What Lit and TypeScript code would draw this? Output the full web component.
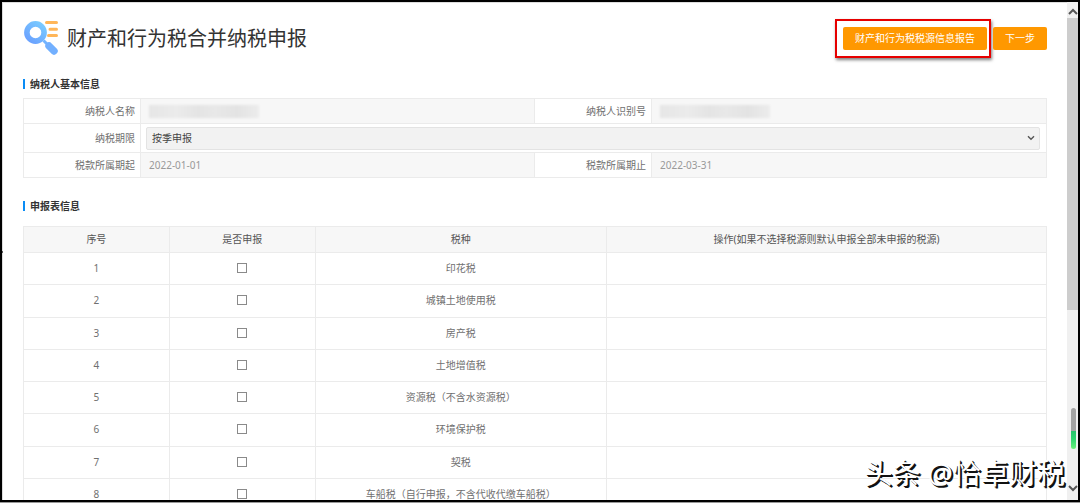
import { LitElement, html, css } from "lit";
import { customElement, property } from "lit/decorators.js";

const TAXES = [
  "印花税",
  "城镇土地使用税",
  "房产税",
  "土地增值税",
  "资源税（不含水资源税）",
  "环境保护税",
  "契税",
  "车船税（自行申报，不含代收代缴车船税）",
];

@customElement("section-title")
class SectionTitle extends LitElement {
  @property() text = "";

  static styles = css`
    :host {
      display: block;
    }
    .title {
      display: flex;
      align-items: center;
      gap: 5px;
      margin: 0;
      font-size: 10px;
      line-height: 16px;
      font-weight: 700;
      color: #333;
    }
    .bar {
      width: 2px;
      height: 10px;
      background: #0a8cf5;
    }
  `;

  render() {
    return html`<h2 class="title"><span class="bar"></span>${this.text}</h2>`;
  }
}

@customElement("app-root")
class AppRoot extends LitElement {
  static styles = css`
    :host {
      display: block;
      height: 100vh;
      background: #999;
      font-family: "Noto Sans", "Noto Sans CJK SC", sans-serif;
      font-size: 10px;
      line-height: 16px;
      color: #707070;
    }
    * {
      box-sizing: border-box;
    }
    .frame {
      position: relative;
      display: flex;
      height: calc(100vh - 1px);
      border: 2px solid #000;
      background: #fff;
      overflow: hidden;
    }
    .page {
      flex: 1;
      min-width: 0;
      overflow: hidden;
      padding: 16px 20px 0 20px;
      border-left: 1px solid #ddd;
      border-top: 1px solid #ddd;
    }
    .head {
      display: flex;
      align-items: center;
      height: 38px;
    }
    .logo {
      flex: none;
      width: 36px;
      height: 36px;
    }
    .name {
      flex: 1;
      margin: 0 0 0 8px;
      padding-top: 2px;
      font-size: 20px;
      line-height: 28px;
      font-weight: 400;
      color: #333;
    }
    .btn {
      height: 23px;
      padding: 0 12px;
      border: 0;
      border-radius: 2px;
      background: #ff9800;
      color: #fff;
      font: inherit;
    }
    .marked {
      display: flex;
      padding: 6px 2px 6px 6px;
      border: 2px solid #e60000;
      box-shadow: 1px 2px 3px rgba(0, 0, 0, 0.5);
      margin-right: 2px;
    }
    .basic {
      margin-top: 19px;
    }
    .reports {
      margin-top: 20px;
    }
    .info {
      display: grid;
      grid-template-columns: 117px 1fr 117px 1fr;
      grid-template-rows: 25px 29px 25px;
      margin-top: 6px;
      border: solid #ebebeb;
      border-width: 1px 1px 0 1px;
    }
    .label {
      display: flex;
      align-items: center;
      justify-content: flex-end;
      padding-right: 5px;
      border: solid #ebebeb;
      border-width: 0 1px 1px 0;
    }
    .value {
      display: flex;
      align-items: center;
      min-width: 0;
      padding: 0 8px;
      background: #f7f7f7;
      border: solid #ebebeb;
      border-width: 0 1px 1px 0;
    }
    .value.end {
      border-right: 0;
    }
    .date {
      width: 100%;
      padding: 0;
      border: 0;
      background: none;
      font: inherit;
      color: #999;
    }
    .hidden-name {
      width: 110px;
      height: 13px;
      background: linear-gradient(90deg, #e6e6e6, #ebebeb 25%, #e4e4e4 45%, #e8e8e8 60%, #e3e3e3 80%, #ececec);
      filter: blur(1px);
    }
    .pick {
      grid-column: span 3;
      display: grid;
      align-items: center;
      padding: 0 6px 0 5px;
      border-bottom: 1px solid #ebebeb;
    }
    .select {
      grid-area: 1 / 1;
      appearance: none;
      width: 100%;
      height: 23px;
      padding: 0 5px;
      border: 1px solid #e3e3e3;
      border-radius: 2px;
      background: #f2f2f2;
      font: inherit;
      color: #444;
    }
    .arrow {
      grid-area: 1 / 1;
      justify-self: end;
      margin-right: 5px;
      width: 8px;
      height: 6px;
      pointer-events: none;
    }
    .list {
      width: 100%;
      height: 285px;
      margin-top: 12px;
      border-collapse: collapse;
      table-layout: fixed;
      text-align: center;
    }
    .list th,
    .list td {
      padding: 0 0 1px;
      border: 1px solid #ebebeb;
      font-weight: 400;
    }
    .list th {
      height: 26px;
      background: #f7f7f7;
      color: #555;
    }
    .num,
    .flag {
      width: 14.25%;
    }
    .tax {
      width: 28.5%;
    }
    .check {
      appearance: none;
      display: block;
      width: 10px;
      height: 10px;
      margin: 0 auto;
      border: 1px solid #8a8a8a;
      background: #fff;
    }
    .scroll {
      flex: none;
      display: flex;
      flex-direction: column;
      align-items: center;
      width: 11px;
      padding: 6px 0 8px;
      background: #f0f0f0;
    }
    .chev {
      flex: none;
      width: 10px;
      height: 7px;
    }
    .track {
      flex: 1;
      width: 100%;
      padding: 3px 0;
    }
    .thumb {
      width: 100%;
      height: 63%;
      background: #cdcdcd;
    }
    .gauge {
      position: absolute;
      right: 2px;
      bottom: 51px;
      width: 5px;
      height: 41px;
      border-radius: 3px;
      background: linear-gradient(#a3a3a3 56%, #27c26b 56%, #2fd470 75%, #6bf07a);
    }
    .mark {
      position: absolute;
      right: 13px;
      bottom: 7px;
      font-size: 28px;
      line-height: 40px;
      color: #fff;
      text-shadow: 1px 1px 0 #111, 2px 2px 0 #111;
      white-space: nowrap;
    }
    .handle {
      position: absolute;
      left: 0;
      top: 50%;
      width: 1px;
      height: 2px;
      background: #555;
    }
  `;

  render() {
    return html`
      <div class="frame">
        <main class="page">
          <header class="head">
            <svg class="logo" viewBox="0 0 36 36" aria-hidden="true">
              <defs>
                <linearGradient id="blue" x1="1" y1="0" x2="0.2" y2="1">
                  <stop offset="0" stop-color="#7accff" />
                  <stop offset="1" stop-color="#6ba3ff" />
                </linearGradient>
              </defs>
              <path d="M20.5 20.5l4 4" stroke="#72b4ff" stroke-width="3" />
              <path d="M26 26l5 5" stroke="#72b0ff" stroke-width="7.4" stroke-linecap="round" />
              <circle cx="12.5" cy="12.5" r="8.6" fill="none" stroke="url(#blue)" stroke-width="5.6" />
              <path d="M23.5 2.5h10M27 9.2h6.5M25.5 15.6h8" stroke="#ffb659" stroke-width="3" stroke-linecap="round" />
            </svg>
            <h1 class="name">财产和行为税合并纳税申报</h1>
            <div class="marked"><button class="btn" type="button">财产和行为税税源信息报告</button></div>
            <button class="btn" type="button">下一步</button>
          </header>

          <section-title class="basic" text="纳税人基本信息"></section-title>
          <form class="info">
            <span class="label">纳税人名称</span>
            <div class="value"><span class="hidden-name"></span></div>
            <span class="label">纳税人识别号</span>
            <div class="value end"><span class="hidden-name"></span></div>
            <label class="label" for="period">纳税期限</label>
            <div class="pick">
              <select class="select" id="period">
                <option>按季申报</option>
              </select>
              <svg class="arrow" viewBox="0 0 8 6" aria-hidden="true">
                <path d="M1 1.2l3 3 3-3" fill="none" stroke="#555" stroke-width="1.4" />
              </svg>
            </div>
            <label class="label" for="from">税款所属期起</label>
            <div class="value"><input class="date" id="from" readonly value="2022-01-01" /></div>
            <label class="label" for="to">税款所属期止</label>
            <div class="value end"><input class="date" id="to" readonly value="2022-03-31" /></div>
          </form>

          <section-title class="reports" text="申报表信息"></section-title>
          <table class="list">
            <thead>
              <tr>
                <th class="num">序号</th>
                <th class="flag">是否申报</th>
                <th class="tax">税种</th>
                <th>操作(如果不选择税源则默认申报全部未申报的税源)</th>
              </tr>
            </thead>
            <tbody>
              ${TAXES.map(
                (tax, i) => html`<tr>
                  <td>${i + 1}</td>
                  <td><input class="check" type="checkbox" aria-label=${tax} /></td>
                  <td>${tax}</td>
                  <td></td>
                </tr>`
              )}
            </tbody>
          </table>
        </main>
        <div class="scroll" aria-hidden="true">
          <svg class="chev" viewBox="0 0 10 7"><path d="M1 6l4-4 4 4" fill="none" stroke="#555" stroke-width="2" /></svg>
          <div class="track"><div class="thumb"></div></div>
          <svg class="chev" viewBox="0 0 10 7"><path d="M1 1l4 4 4-4" fill="none" stroke="#555" stroke-width="2" /></svg>
        </div>
        <div class="gauge"></div>
        <div class="handle"></div>
        <div class="mark">头条 @恰卓财税</div>
      </div>
    `;
  }
}
